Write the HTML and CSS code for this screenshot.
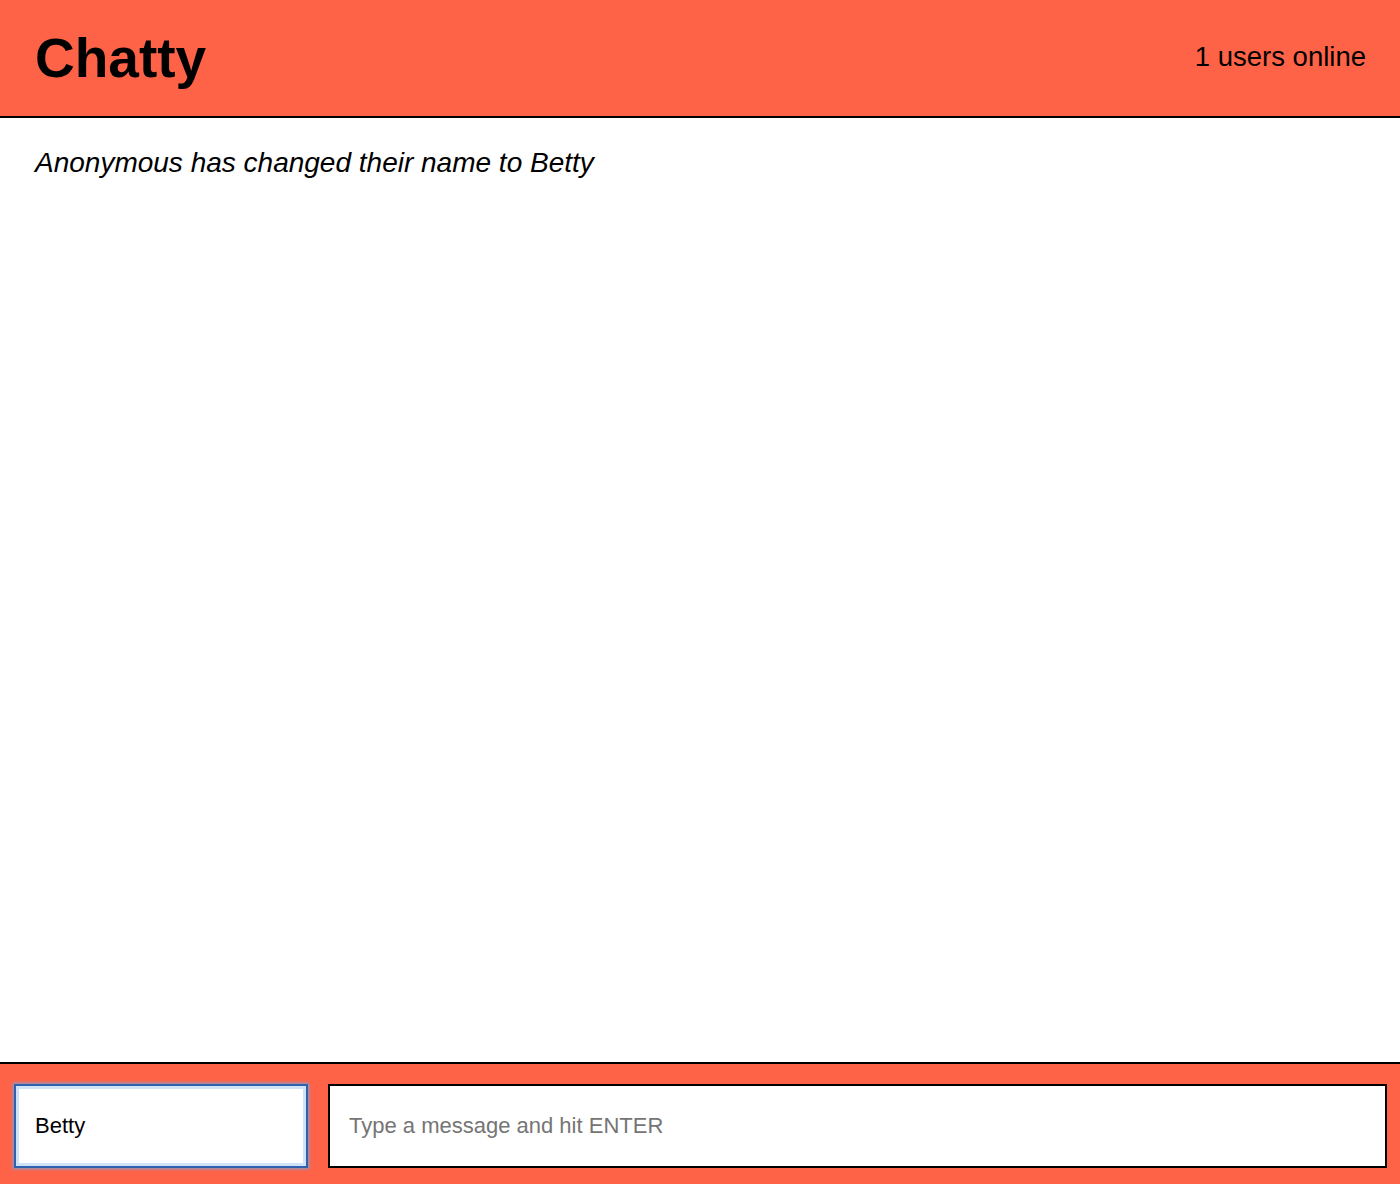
FILE: index.html
```html
<!DOCTYPE html>
<html>
<head>
<meta charset="utf-8">
<title>Chatty</title>
<link rel="stylesheet" href="styles.css">
</head>
<body>
<div class="app">
  <header class="navbar">
    <h1 class="brand">Chatty</h1>
    <span class="online">1 users online</span>
  </header>
  <main class="messages">
    <p class="notification">Anonymous has changed their name to Betty</p>
  </main>
  <footer class="chatbar">
    <div class="name-box">Betty</div>
    <div class="msg-box">Type a message and hit ENTER</div>
  </footer>
</div>
</body>
</html>
```

FILE: styles.css
```css
html, body {
  margin: 0;
  padding: 0;
  height: 100%;
}
body {
  font-family: "Liberation Sans", Arial, sans-serif;
  color: #000;
  background: #fff;
}
.app {
  display: flex;
  flex-direction: column;
  height: 100vh;
}
.navbar {
  height: 116px;
  flex: 0 0 auto;
  background: #ff6347;
  border-bottom: 2px solid #000;
  display: flex;
  align-items: center;
  justify-content: space-between;
  padding: 0 34px 0 35px;
}
.brand {
  margin: 0;
  font-size: 55px;
  font-weight: bold;
  line-height: 1;
}
.online {
  font-size: 27.5px;
  position: relative;
  top: -1px;
}
.messages {
  flex: 1 1 auto;
  padding: 29px 35px;
}
.notification {
  margin: 0;
  font-size: 28px;
  font-style: italic;
  line-height: 32px;
}
.chatbar {
  flex: 0 0 auto;
  background: #ff6347;
  border-top: 2px solid #000;
  display: flex;
  gap: 20px;
  padding: 20px 13px 16px 14px;
}
.name-box, .msg-box {
  box-sizing: border-box;
  height: 84px;
  background: #fff;
  border: 2px solid #000;
  display: flex;
  align-items: center;
  font-size: 22px;
  padding-left: 19px;
}
.name-box {
  width: 294px;
  flex: 0 0 auto;
  border-color: #2f62ad;
  box-shadow: 0 0 3px 1px #7f9ed6, inset 0 0 0 3px #cfe2f8;
}
.msg-box {
  flex: 1 1 auto;
  color: #757575;
}
```
